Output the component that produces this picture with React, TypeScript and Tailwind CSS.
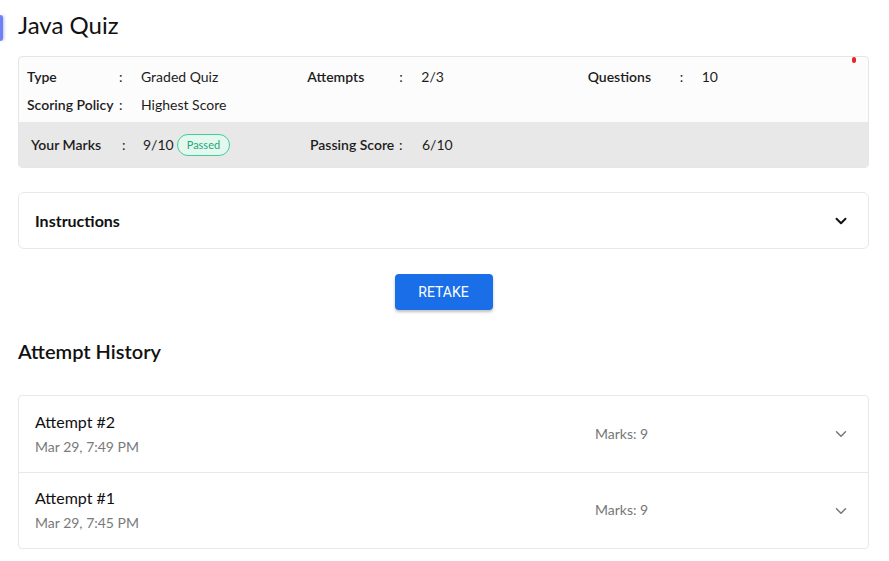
import { ChevronDown } from "lucide-react";

function InfoCell({
  label,
  value,
  labelW = "w-[92px]",
  colonW = "w-[22px]",
  children,
}: {
  label: string;
  value?: string;
  labelW?: string;
  colonW?: string;
  children?: React.ReactNode;
}) {
  return (
    <div className="flex items-center text-[14px] text-[#1c1c1c]">
      <span className={`${labelW} shrink-0 font-semibold`}>{label}</span>
      <span className={`${colonW} shrink-0`}>:</span>
      {value && <span>{value}</span>}
      {children}
    </div>
  );
}

const attempts = [
  { name: "Attempt #2", date: "Mar 29, 7:49 PM", marks: 9 },
  { name: "Attempt #1", date: "Mar 29, 7:45 PM", marks: 9 },
];

export default function App() {
  return (
    <div
      className="relative h-[561px] w-full overflow-hidden bg-white"
      style={{ fontFamily: "Lato, 'Noto Sans', sans-serif" }}
    >
      {/* left accent */}
      <div className="absolute left-0 top-[15px] h-[26px] w-[3px] rounded-r-sm bg-[#6f80f6] shadow-[1px_0_3px_rgba(80,90,200,0.4)]" />

      <div className="pl-[18px] pr-[20px] pt-[9px]">
        <h1 className="text-[24px] leading-[32px] text-[#111]">Java Quiz</h1>

        {/* quiz info */}
        <div className="relative mt-[15px] overflow-hidden rounded-[4px] border border-[#e6e6e6] bg-[#fcfcfc]">
          <div className="grid grid-cols-3 pb-[4px] pl-[8px] pt-[5px]">
            <div className="flex h-[28px] items-center">
              <InfoCell label="Type" value="Graded Quiz" />
            </div>
            <div className="flex h-[28px] items-center">
              <InfoCell label="Attempts" value="2/3" />
            </div>
            <div className="flex h-[28px] items-center">
              <InfoCell label="Questions" value="10" />
            </div>
            <div className="flex h-[28px] items-center">
              <InfoCell label="Scoring Policy" value="Highest Score" />
            </div>
          </div>
          <div className="grid h-[45px] grid-cols-3 items-center bg-[#e8e8e8] pl-[12px]">
            <InfoCell label="Your Marks" labelW="w-[91px]" colonW="w-[21px]">
              <span>9/10</span>
              <span className="ml-[3px] rounded-full border border-[#3fcf9d] bg-[#e5f8f0] px-[9px] text-[11px] leading-[20px] text-[#1aa978]">
                Passed
              </span>
            </InfoCell>
            <InfoCell label="Passing Score" value="6/10" labelW="w-[89px]" colonW="w-[23px]" />
          </div>
          <span className="absolute right-[12px] top-0 h-[6px] w-[4px] rounded-full bg-[#e8232a]" />
        </div>

        {/* instructions */}
        <div className="mt-[24px] flex h-[57px] items-center justify-between rounded-[6px] border border-[#e8e8ea] pl-[16px] pr-[18px]">
          <span className="text-[16px] font-bold text-[#111]">Instructions</span>
          <ChevronDown size={18} strokeWidth={2.6} className="text-[#111]" />
        </div>

        <div className="mt-[25px] flex justify-center">
          <button
            className="h-[36px] w-[98px] rounded-[4px] bg-[#1a6ee8] text-[14px] text-white shadow-[0_2px_3px_rgba(0,0,0,0.25)]"
            style={{ fontFamily: "Roboto, sans-serif" }}
          >
            RETAKE
          </button>
        </div>

        <h2 className="mt-[27px] text-[20px] font-semibold leading-[28px] text-[#111]">Attempt History</h2>

        <div className="mt-[30px] overflow-hidden rounded-[4px] border border-[#e8e8e8]">
          {attempts.map((a, i) => (
            <div
              key={a.name}
              className={`flex h-[76px] items-center pl-[16px] pr-[18px] ${i > 0 ? "border-t border-[#e8e8e8]" : ""}`}
            >
              <div className="flex flex-col">
                <span className="text-[16px] leading-[22px] text-[#111]">{a.name}</span>
                <span className="mt-[3px] text-[14px] leading-[22px] text-[#7a7a7a]">{a.date}</span>
              </div>
              <span className="ml-auto mb-[2px] w-[237px] text-[14px] text-[#777]">Marks: {a.marks}</span>
              <ChevronDown size={18} strokeWidth={2} className="text-[#777]" />
            </div>
          ))}
        </div>
      </div>
    </div>
  );
}
